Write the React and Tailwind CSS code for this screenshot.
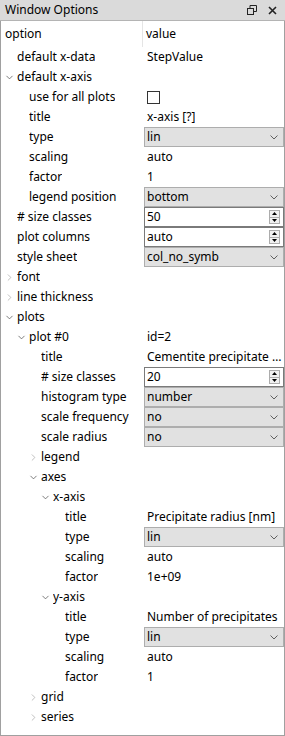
import { ChevronDown, ChevronRight } from 'lucide-react';

const rows = [
  { level: 0, label: 'default x-data', value: 'StepValue' },
  { level: 0, label: 'default x-axis', open: true },
  { level: 1, label: 'use for all plots', check: true },
  { level: 1, label: 'title', value: 'x-axis [?]' },
  { level: 1, label: 'type', combo: 'lin' },
  { level: 1, label: 'scaling', value: 'auto' },
  { level: 1, label: 'factor', value: '1' },
  { level: 1, label: 'legend position', combo: 'bottom' },
  { level: 0, label: '# size classes', spin: '50' },
  { level: 0, label: 'plot columns', spin: 'auto' },
  { level: 0, label: 'style sheet', combo: 'col_no_symb' },
  { level: 0, label: 'font', open: false },
  { level: 0, label: 'line thickness', open: false },
  { level: 0, label: 'plots', open: true },
  { level: 1, label: 'plot #0', open: true, value: 'id=2' },
  { level: 2, label: 'title', value: 'Cementite precipitate distribution' },
  { level: 2, label: '# size classes', spin: '20' },
  { level: 2, label: 'histogram type', combo: 'number' },
  { level: 2, label: 'scale frequency', combo: 'no' },
  { level: 2, label: 'scale radius', combo: 'no' },
  { level: 2, label: 'legend', open: false },
  { level: 2, label: 'axes', open: true },
  { level: 3, label: 'x-axis', open: true },
  { level: 4, label: 'title', value: 'Precipitate radius [nm]' },
  { level: 4, label: 'type', combo: 'lin' },
  { level: 4, label: 'scaling', value: 'auto' },
  { level: 4, label: 'factor', value: '1e+09' },
  { level: 3, label: 'y-axis', open: true },
  { level: 4, label: 'title', value: 'Number of precipitates' },
  { level: 4, label: 'type', combo: 'lin' },
  { level: 4, label: 'scaling', value: 'auto' },
  { level: 4, label: 'factor', value: '1' },
  { level: 2, label: 'grid', open: false },
  { level: 2, label: 'series', open: false },
];

const pad = ['pl-[3px]', 'pl-[15px]', 'pl-[27px]', 'pl-[39px]', 'pl-[51px]'];

function Combo({ text }) {
  return (
    <div className="flex h-5 w-full items-center border border-[#adadad] bg-[#e1e1e1] pl-[2px] pr-[5px]">
      <span className="flex-1 truncate leading-[16px]">{text}</span>
      <svg width="8" height="5" viewBox="0 0 8 5" className="text-[#606060]">
        <path d="M0.5 0.5 L4 4 L7.5 0.5" fill="none" stroke="currentColor" strokeWidth="1" />
      </svg>
    </div>
  );
}

function Spin({ text }) {
  return (
    <div className="flex h-5 w-full items-center border border-[#7a7a7a] bg-white pl-[2px] pr-[3px]">
      <span className="flex-1 truncate leading-[16px]">{text}</span>
      <div className="flex h-[14px] w-[11px] flex-col border border-[#acacac] bg-[#f0f0f0]">
        <div className="flex flex-1 items-center justify-center border-b border-[#acacac]">
          <svg width="5" height="3" viewBox="0 0 5 3"><path d="M0 3 L2.5 0 L5 3 Z" fill="#000" /></svg>
        </div>
        <div className="flex flex-1 items-center justify-center">
          <svg width="5" height="3" viewBox="0 0 5 3"><path d="M0 0 L2.5 3 L5 0 Z" fill="#000" /></svg>
        </div>
      </div>
    </div>
  );
}

function Row({ row }) {
  return (
    <div className="flex h-5 items-center">
      <div className={`flex w-[143px] shrink-0 items-center ${pad[row.level]}`}>
        <span className="flex w-[13px] shrink-0 items-center">
          {row.open === true && <ChevronDown size={11} strokeWidth={1.6} className="text-[#505050]" />}
          {row.open === false && <ChevronRight size={11} strokeWidth={1.6} className="text-[#a8a8a8]" />}
        </span>
        <span className="truncate leading-[16px]">{row.label}</span>
      </div>
      <div className="flex min-w-0 flex-1 items-center">
        {row.value && <span className="truncate pl-[3px] leading-[16px]">{row.value}</span>}
        {row.check && <span className="ml-[3px] h-[13px] w-[13px] border border-[#333]" />}
        {row.combo && <Combo text={row.combo} />}
        {row.spin && <Spin text={row.spin} />}
      </div>
    </div>
  );
}

export default function App() {
  return (
    <div className="h-[736px] w-[285px] bg-white text-[12px] leading-[16px] text-black" style={{ fontFamily: '"Noto Sans", sans-serif' }}>
      <div className="flex h-[21px] items-center border-b border-[#b4b4b4] bg-[#dadada] pl-[5px] pr-[8px]">
        <span className="flex-1">Window Options</span>
        <svg width="10" height="10" viewBox="0 0 10 10" className="mr-[11px]">
          <rect x="0.5" y="3.5" width="6" height="6" fill="none" stroke="#222" />
          <path d="M3 3.5 V0.5 H9.5 V6.5 H6.5" fill="none" stroke="#222" />
        </svg>
        <svg width="9" height="9" viewBox="0 0 9 9">
          <path d="M1 1 L8 8 M8 1 L1 8" stroke="#222" strokeWidth="1.6" />
        </svg>
      </div>
      <div className="h-[715px] border-x border-b border-[#a0a0a0]">
        <div className="flex h-[26px] items-center">
          <div className="flex h-full w-[142px] items-center border-r border-[#e5e5e5] pl-[4px]">option</div>
          <div className="pl-[3px]">value</div>
        </div>
        {rows.map((r, i) => (
          <Row key={i} row={r} />
        ))}
      </div>
    </div>
  );
}
